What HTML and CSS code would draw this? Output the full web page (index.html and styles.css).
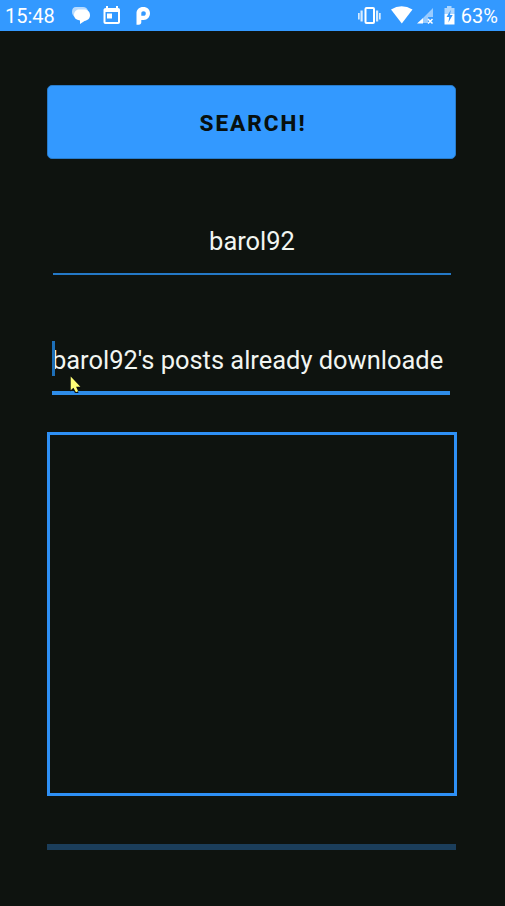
FILE: index.html
```html
<!DOCTYPE html>
<html lang="en">
<head>
<meta charset="utf-8">
<title>Search</title>
<link rel="stylesheet" href="styles.css">
</head>
<body>
<header class="status">
  <span class="time">15:48</span>
  <svg class="notifications" width="82" height="30" viewBox="70 0 82 30" fill="#fff">
    <path opacity=".65" d="M76 6h7q4 0 5 4l-10 7q-6-1-6-6 0-5 4-5z"/>
    <path d="M79 8.500h5c4 0 6 2.500 6 6 0 3-2.500 5-5.500 5.500l-4.500 3v-3.500c-4-.5-6-2.500-6-5.500s2-5.500 5-5.500z"/>
    <path fill-rule="evenodd" d="M106 5h2v2h8V5h2v2c1.300 0 2 .7 2 2v12c0 1.300-.7 2-2 2h-12.500c-1.300 0-2-.7-2-2V9c0-1.300.8-2 2.500-2zM105.500 11v10h12.500V11z"/>
    <path d="M107 12.500h5v5h-5z"/>
    <path fill-rule="evenodd" d="M136.500 12.500c0-4 2.700-6.500 6.700-6.500 4.200 0 6.800 2.600 6.800 6.300s-2.600 6.700-6.300 6.700h-2.400v2.200c0 1.600-1 2.500-2.500 2.500h-2.300zM141.300 14.800h2.200c1.500 0 2.300-.9 2.300-2.300s-.8-2.300-2.300-2.300-2.200.9-2.200 2.300z"/>
  </svg>
  <svg class="system" width="100" height="30" viewBox="357 0 100 30" fill="#fff">
    <path opacity=".8" d="M358 12h1.700v6.500H358zM360.500 9.500h2.200v11h-2.200zM376 9.500h2.200v11H376zM379 12h1.700v6.500H379z"/>
    <rect x="365.500" y="7" width="8.500" height="15" rx="1" fill="none" stroke="#fff" stroke-width="2"/>
    <path d="M391 8.500q10.500-6.500 21.500 0L401.800 22.500z"/>
    <path opacity=".5" d="M433 7v9h-5v6h-5v-5z"/>
    <path d="M417 22.500l6-5.500v5.500z"/>
    <path d="M428 18l4.500 4.500m0-4.500L428 22.500" fill="none" stroke="#fff" stroke-width="1.500"/>
    <path opacity=".6" d="M447 5h4.500v2h3v6h-10V7h2.500z"/>
    <path d="M444.500 13h10v10.500h-10z"/>
    <path d="M450.800 9l-4.300 7h2.700l-.8 5.500 4.300-7.500H450z" fill="#39f"/>
  </svg>
  <span class="percent">63%</span>
</header>
<main class="screen">
  <button class="search">SEARCH!</button>
  <div class="field user">barol92</div>
  <div class="field message"><span class="caret"></span>barol92's posts already downloade
    <svg class="pointer" width="12" height="18" viewBox="0 0 12 18"><path d="M0 1.500v14l3-2.500 2 4h3.500L7.200 12.500h3.500z" fill="#050a10"/><path d="M.7.500v13.800l2.700-2.600 2.500 4.600 2.200-1-2-4.500h4.300z" fill="#ff7"/></svg>
  </div>
  <div class="preview"></div>
  <div class="progress"></div>
</main>
</body>
</html>
```
FILE: styles.css
```css
* { box-sizing: border-box; }
body {
  margin: 0;
  height: 906px;
  overflow: hidden;
  background: #0e130f;
  color: #fff;
  font-family: Roboto, "Liberation Sans", sans-serif;
}
.status {
  display: flex;
  align-items: center;
  height: 31px;
  padding: 0 7px 0 5px;
  background: #39f;
  font-size: 20px;
  line-height: 30px;
  white-space: nowrap;
}
.time { width: 65px; }
.system { margin-left: auto; }
.percent { width: 41px; text-align: right; }
.notifications, .system { flex: none; }
.screen {
  display: flex;
  flex-direction: column;
  padding: 54px 49px 0 47px;
}
.search {
  height: 74px;
  padding: 2px 0 0 3px;
  border: 1px solid #287bc9;
  border-radius: 5px;
  background: #39f;
  color: #07100f;
  font: 800 22.500px Roboto, "Liberation Sans", sans-serif;
  letter-spacing: 2px;
}
.field {
  position: relative;
  font-size: 25.450px;
  line-height: 36px;
  white-space: nowrap;
  color: #f1f5f1;
}
.user {
  height: 52px;
  margin: 64px 5px 0 6px;
  border-bottom: 2px solid #2479c7;
  text-align: center;
}
.message {
  height: 54px;
  margin: 66px 6px 0 5px;
  padding-top: 1px;
  border-bottom: 4px solid #2e8de9;
}
.caret {
  position: absolute;
  left: 0;
  top: 0;
  width: 2.500px;
  height: 35px;
  background: #1d6fb8;
}
.pointer { position: absolute; left: 18px; top: 35px; }
.preview {
  height: 364px;
  margin: 37px -1px 0 0;
  border: 3px solid #2e90f5;
}
.progress {
  height: 6px;
  margin-top: 48px;
  background: #1b3e5b;
}
```
